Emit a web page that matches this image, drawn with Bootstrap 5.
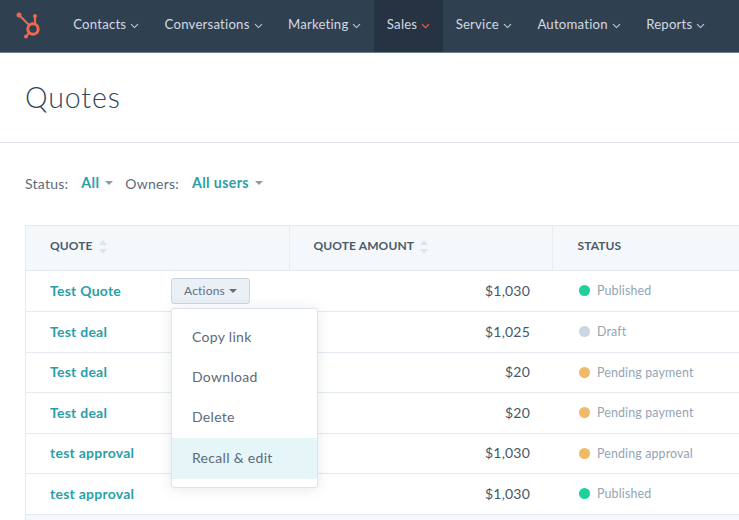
<!DOCTYPE html>
<html lang="en">
<head>
<meta charset="utf-8">
<title>Quotes</title>
<link href="https://cdn.jsdelivr.net/npm/bootstrap@5.3.0/dist/css/bootstrap.min.css" rel="stylesheet">
<style>
html,body{height:520px;overflow:hidden}
body{font-family:Lato,"Open Sans",sans-serif;color:#33475b;background:#fff;width:739px}
.hs-top{height:53px;background:#2f4050;border-bottom:1px solid #6f7f8f;padding:0;flex-wrap:nowrap;align-items:stretch;justify-content:flex-start}
.hs-logo{flex:none;width:60.5px;padding-left:15px;display:flex;align-items:center}
.hs-link{flex:none;display:flex;align-items:center;gap:4px;padding:0 12.7px 3px;color:#d3dae2;font-size:13.2px;letter-spacing:.2px;text-decoration:none;white-space:nowrap}
.hs-link svg{width:9px;height:6px;margin-top:2px}
.hs-on{background:#253342}
.hs-head{height:90px;border-bottom:1px solid #dfe3eb;padding-left:25px;display:flex;align-items:center}
.hs-title{font-size:28.5px;font-weight:300;letter-spacing:.9px;color:#33475b;margin:0}
.hs-filter{padding:0 25px 2px;height:82px;font-size:14px;color:#5c6b7a;letter-spacing:.25px}
.hs-sel{color:#2a9fa8;font-weight:700;font-size:14.2px;margin-left:13px;letter-spacing:.35px}
.hs-caret{display:inline-block;border-left:4.5px solid transparent;border-right:4.5px solid transparent;border-top:4.5px solid #8b9cad;margin:0 12px 0 6px}
.hs-wrap{margin-left:25px;width:714px;overflow:hidden;border-top:1px solid #e6eaf0;border-left:1px solid #e6eaf0}
.hs-table{table-layout:fixed;width:800px;margin:0;border-collapse:collapse}
.hs-table th{height:44px;background:#f5f8fa;font-size:12px;font-weight:700;color:#4b5b6b;letter-spacing:.1px;padding:0 0 3px 24px;vertical-align:middle;border-bottom:1px solid #e6eaf0;border-right:1px solid #e9edf2;text-transform:uppercase;box-shadow:none}
.hs-table td{height:41px;padding:0 0 1px 24px;vertical-align:middle;border-bottom:1px solid #e6eaf0;font-size:14px;color:#465769;box-shadow:none;background:#fff}
.hs-table tr:nth-child(3) td,.hs-table tr:nth-child(5) td{height:40px}
.hs-table td.hs-foot{height:20px;background:#f5f8fa;border-bottom:0}
.hs-name{color:#2a9fa8;font-weight:700;letter-spacing:.25px;text-decoration:none;font-size:14px}
.hs-table td.hs-amt{text-align:right;padding-right:22px;letter-spacing:.2px}
.hs-table td.hs-st{font-size:12.4px;color:#93a4b5;letter-spacing:.15px;padding:2px 0 0 27px}
.hs-table th.hs-st3{padding-left:25px}
.hs-dot{display:inline-block;width:11px;height:11px;border-radius:50%;margin-right:7px;vertical-align:-1px}
.hs-sort{display:inline-flex;flex-direction:column;gap:4px;margin-left:6px;vertical-align:middle}
.hs-sort i{display:block;border-left:4px solid transparent;border-right:4px solid transparent}
.hs-sort i:first-child{border-bottom:5px solid #dfe3eb}
.hs-sort i:last-child{border-top:5px solid #dfe3eb}
.hs-cell{position:relative}
.hs-table td.hs-cell{padding-bottom:0}
.hs-act{position:absolute;left:145px;top:7px;height:26px;width:79px;padding:0;background:#eaf0f6;border:1px solid #cbd6e2;border-radius:3px;color:#5c6f82;font-size:12px;letter-spacing:.2px}
.hs-act::after{content:"";display:inline-block;border-left:4px solid transparent;border-right:4px solid transparent;border-top:4px solid #5c6f82;margin-left:4px;vertical-align:2px}
.hs-menu{position:absolute;left:171px;top:308px;width:147px;min-width:0;height:180px;background:#fff;border:1px solid #dfe3eb;border-radius:3px;box-shadow:0 1px 14px rgba(45,62,80,.12);padding:8px 0;margin:0;z-index:5;display:block}
.hs-menu .dropdown-item{height:40.4px;display:flex;align-items:center;padding:0 0 2px 20px;font-size:14px;letter-spacing:.3px;color:#5c6b7a}
.hs-menu .dropdown-item.hs-hot{background:#e5f5f8}
</style>
</head>
<body>
<nav class="navbar hs-top">
  <div class="hs-logo">
    <svg width="28" height="28" viewBox="0 0 28 28" fill="none" stroke="#f2684f">
      <circle cx="18" cy="17" r="5.2" stroke-width="3"/>
      <path d="M4 3 14 13" stroke-width="2"/>
      <circle cx="4" cy="3" r="2.5" fill="#f2684f" stroke="none"/>
      <path d="M20 4v8" stroke-width="2.2"/>
      <circle cx="20" cy="4" r="2" fill="#f2684f" stroke="none"/>
      <path d="M14 21 11 24.5" stroke-width="2"/>
      <circle cx="11" cy="24.5" r="2" fill="#f2684f" stroke="none"/>
    </svg>
  </div>
  <a class="hs-link" href="#">Contacts <svg viewBox="0 0 9 6" fill="none" stroke="#c3ccd6" stroke-width="1.1"><path d="M1 1.2 4.5 4.6 8 1.2"/></svg></a>
  <a class="hs-link" href="#">Conversations <svg viewBox="0 0 9 6" fill="none" stroke="#c3ccd6" stroke-width="1.1"><path d="M1 1.2 4.5 4.6 8 1.2"/></svg></a>
  <a class="hs-link" href="#">Marketing <svg viewBox="0 0 9 6" fill="none" stroke="#c3ccd6" stroke-width="1.1"><path d="M1 1.2 4.5 4.6 8 1.2"/></svg></a>
  <a class="hs-link hs-on" href="#">Sales <svg viewBox="0 0 9 6" fill="none" stroke="#d8604c" stroke-width="1.3"><path d="M1 1.2 4.5 4.6 8 1.2"/></svg></a>
  <a class="hs-link" href="#">Service <svg viewBox="0 0 9 6" fill="none" stroke="#c3ccd6" stroke-width="1.1"><path d="M1 1.2 4.5 4.6 8 1.2"/></svg></a>
  <a class="hs-link" href="#">Automation <svg viewBox="0 0 9 6" fill="none" stroke="#c3ccd6" stroke-width="1.1"><path d="M1 1.2 4.5 4.6 8 1.2"/></svg></a>
  <a class="hs-link" href="#">Reports <svg viewBox="0 0 9 6" fill="none" stroke="#c3ccd6" stroke-width="1.1"><path d="M1 1.2 4.5 4.6 8 1.2"/></svg></a>
</nav>
<header class="hs-head"><h1 class="hs-title">Quotes</h1></header>
<div class="hs-filter d-flex align-items-center">
  <span>Status:</span><span class="hs-sel">All</span><span class="hs-caret"></span>
  <span>Owners:</span><span class="hs-sel">All users</span><span class="hs-caret"></span>
</div>
<div class="hs-wrap">
  <table class="table hs-table">
    <colgroup><col style="width:263px"><col style="width:263px"><col></colgroup>
    <thead><tr><th>Quote<span class="hs-sort"><i></i><i></i></span></th><th>Quote amount<span class="hs-sort"><i></i><i></i></span></th><th class="hs-st3">Status</th></tr></thead>
    <tbody>
      <tr><td class="hs-cell"><a class="hs-name" href="#">Test Quote</a><button class="btn hs-act">Actions</button></td><td class="hs-amt">$1,030</td><td class="hs-st"><span class="hs-dot" style="background:#1fcf9c"></span>Published</td></tr>
      <tr><td><a class="hs-name" href="#">Test deal</a></td><td class="hs-amt">$1,025</td><td class="hs-st"><span class="hs-dot" style="background:#cbd6e2"></span>Draft</td></tr>
      <tr><td><a class="hs-name" href="#">Test deal</a></td><td class="hs-amt">$20</td><td class="hs-st"><span class="hs-dot" style="background:#f0b966"></span>Pending payment</td></tr>
      <tr><td><a class="hs-name" href="#">Test deal</a></td><td class="hs-amt">$20</td><td class="hs-st"><span class="hs-dot" style="background:#f0b966"></span>Pending payment</td></tr>
      <tr><td><a class="hs-name" href="#">test approval</a></td><td class="hs-amt">$1,030</td><td class="hs-st"><span class="hs-dot" style="background:#f0b966"></span>Pending approval</td></tr>
      <tr><td><a class="hs-name" href="#">test approval</a></td><td class="hs-amt">$1,030</td><td class="hs-st"><span class="hs-dot" style="background:#1fcf9c"></span>Published</td></tr>
      <tr><td class="hs-foot" colspan="3"></td></tr>
    </tbody>
  </table>
</div>
<ul class="dropdown-menu hs-menu">
  <li><a class="dropdown-item" href="#">Copy link</a></li>
  <li><a class="dropdown-item" href="#">Download</a></li>
  <li><a class="dropdown-item" href="#">Delete</a></li>
  <li><a class="dropdown-item hs-hot" href="#">Recall &amp; edit</a></li>
</ul>
<script src="https://cdn.jsdelivr.net/npm/bootstrap@5.3.0/dist/js/bootstrap.bundle.min.js"></script>
</body>
</html>
